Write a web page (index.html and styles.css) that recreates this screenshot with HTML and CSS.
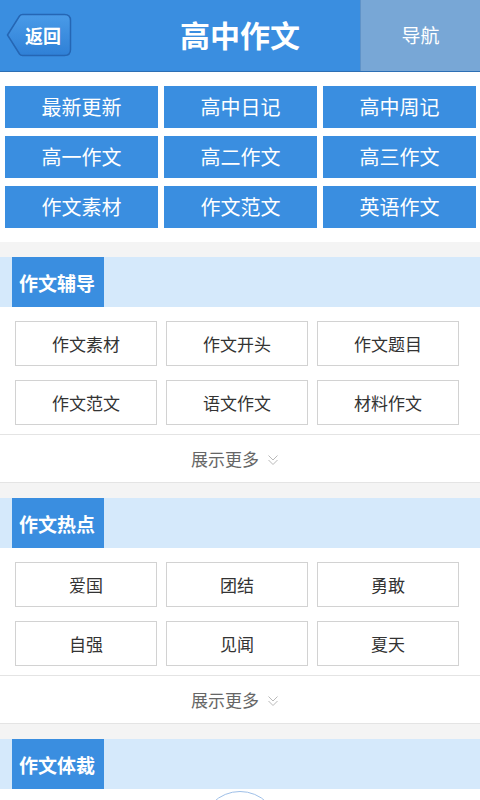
FILE: index.html
```html
<!DOCTYPE html>
<html lang="zh-CN">
<head>
<meta charset="utf-8">
<title>高中作文</title>
<link rel="stylesheet" href="styles.css">
</head>
<body>
<div class="page">
<header class="topbar">
  <div class="back-wrap">
    <a class="back" href="#">
      <svg class="back-shape" viewBox="0 0 66 44" width="66" height="44" aria-hidden="true">
        <defs>
          <linearGradient id="bg" x1="0" y1="0" x2="0" y2="1">
            <stop offset="0" stop-color="#4a9be8"/>
            <stop offset="1" stop-color="#2f80d6"/>
          </linearGradient>
        </defs>
        <path d="M1.5 22 L13.5 3 Q14.6 1.5 16.5 1.5 H58.5 Q64.5 1.5 64.5 7.5 V36.5 Q64.5 42.5 58.5 42.5 H16.5 Q14.6 42.5 13.5 41 Z" fill="url(#bg)" stroke="#2566b4" stroke-width="1.5"/>
      </svg>
      <span class="back-text">返回</span>
    </a>
  </div>
  <h1 class="title">高中作文</h1>
  <a class="nav" href="#">导航</a>
</header>

<nav class="quick">
  <a class="qbtn" href="#">最新更新</a>
  <a class="qbtn" href="#">高中日记</a>
  <a class="qbtn" href="#">高中周记</a>
  <a class="qbtn" href="#">高一作文</a>
  <a class="qbtn" href="#">高二作文</a>
  <a class="qbtn" href="#">高三作文</a>
  <a class="qbtn" href="#">作文素材</a>
  <a class="qbtn" href="#">作文范文</a>
  <a class="qbtn" href="#">英语作文</a>
</nav>

<section class="block">
  <div class="band"><h2 class="tab">作文辅导</h2></div>
  <div class="tags">
    <a class="tag" href="#">作文素材</a>
    <a class="tag" href="#">作文开头</a>
    <a class="tag" href="#">作文题目</a>
    <a class="tag" href="#">作文范文</a>
    <a class="tag" href="#">语文作文</a>
    <a class="tag" href="#">材料作文</a>
  </div>
  <a class="more" href="#">展示更多<svg class="chev" viewBox="0 0 12 14" width="12" height="14" aria-hidden="true"><path d="M1.5 2.5 L6 7 L10.5 2.5 M1.5 7 L6 11.5 L10.5 7" fill="none" stroke="#b9b9b9" stroke-width="1"/></svg></a>
</section>

<section class="block">
  <div class="band"><h2 class="tab">作文热点</h2></div>
  <div class="tags">
    <a class="tag" href="#">爱国</a>
    <a class="tag" href="#">团结</a>
    <a class="tag" href="#">勇敢</a>
    <a class="tag" href="#">自强</a>
    <a class="tag" href="#">见闻</a>
    <a class="tag" href="#">夏天</a>
  </div>
  <a class="more" href="#">展示更多<svg class="chev" viewBox="0 0 12 14" width="12" height="14" aria-hidden="true"><path d="M1.5 2.5 L6 7 L10.5 2.5 M1.5 7 L6 11.5 L10.5 7" fill="none" stroke="#b9b9b9" stroke-width="1"/></svg></a>
</section>

<section class="block">
  <div class="band"><h2 class="tab">作文体裁</h2></div>
  <div class="tags-last"></div>
</section>

<div class="float-btn" aria-hidden="true"></div>
</div>
</body>
</html>
```

FILE: styles.css
```css
* { box-sizing: border-box; }
html, body { margin: 0; padding: 0; }
body {
  background: #ffffff;
  font-family: "Noto Sans CJK SC", "Noto Sans", sans-serif;
  color: #333333;
}
.page {
  position: relative;
  width: 480px;
  height: 800px;
  overflow: hidden;
}
a { text-decoration: none; color: inherit; }
h1, h2 { margin: 0; }

.topbar {
  display: grid;
  grid-template-columns: 120px 1fr 120px;
  height: 72px;
  background: #3a8ee0;
  border-bottom: 1px solid #2d6fb4;
}
.back-wrap {
  display: flex;
  align-items: center;
  padding-left: 6px;
}
.back {
  position: relative;
  display: block;
  width: 66px;
  height: 44px;
  margin-top: -1px;
}
.back-shape { display: block; }
.back-text {
  position: absolute;
  left: 19px;
  top: 0;
  height: 44px;
  line-height: 44px;
  color: #ffffff;
  font-size: 18px;
  font-weight: 700;
}
.title {
  display: flex;
  align-items: center;
  justify-content: center;
  color: #ffffff;
  font-size: 30px;
  font-weight: 700;
  padding-bottom: 3px;
}
.nav {
  display: flex;
  align-items: center;
  justify-content: center;
  background: #78a7d6;
  color: #ffffff;
  font-size: 19px;
  border-left: 1px solid #5f93c9;
  padding-bottom: 2px;
}

.quick {
  display: grid;
  grid-template-columns: repeat(3, 153px);
  grid-auto-rows: 42px;
  gap: 8px 6px;
  padding: 14px 4px 14px 5px;
}
.qbtn {
  display: flex;
  align-items: center;
  justify-content: center;
  background: #3a8ee0;
  color: #ffffff;
  font-size: 20px;
  padding-bottom: 1px;
}

.block {
  border-top: 15px solid #f4f4f4;
}
.band {
  height: 50px;
  background: #d5e9fb;
  padding-left: 12px;
}
.tab {
  display: inline-flex;
  align-items: center;
  height: 50px;
  width: 92px;
  padding-left: 7px;
  background: #3a8ee0;
  color: #ffffff;
  font-size: 19px;
  font-weight: 700;
}
.tags {
  display: grid;
  grid-template-columns: repeat(3, 142px);
  grid-auto-rows: 45px;
  gap: 14px 9px;
  padding: 14px 21px 9px 15px;
}
.tags-last { height: 60px; }
.tag {
  display: flex;
  align-items: center;
  justify-content: center;
  border: 1px solid #d2d2d2;
  font-size: 17px;
  color: #333333;
  background: #ffffff;
}
.more {
  display: flex;
  align-items: center;
  justify-content: center;
  height: 49px;
  border-top: 1px solid #e4e4e4;
  border-bottom: 1px solid #e4e4e4;
  font-size: 17px;
  color: #666666;
  padding-right: 10px;
}
.chev { margin-left: 8px; margin-top: 2px; }

.float-btn {
  position: absolute;
  left: 201px;
  top: 791px;
  width: 78px;
  height: 78px;
  border-radius: 50%;
  border: 1.5px solid #9fc0e8;
  background: #ffffff;
}
```
